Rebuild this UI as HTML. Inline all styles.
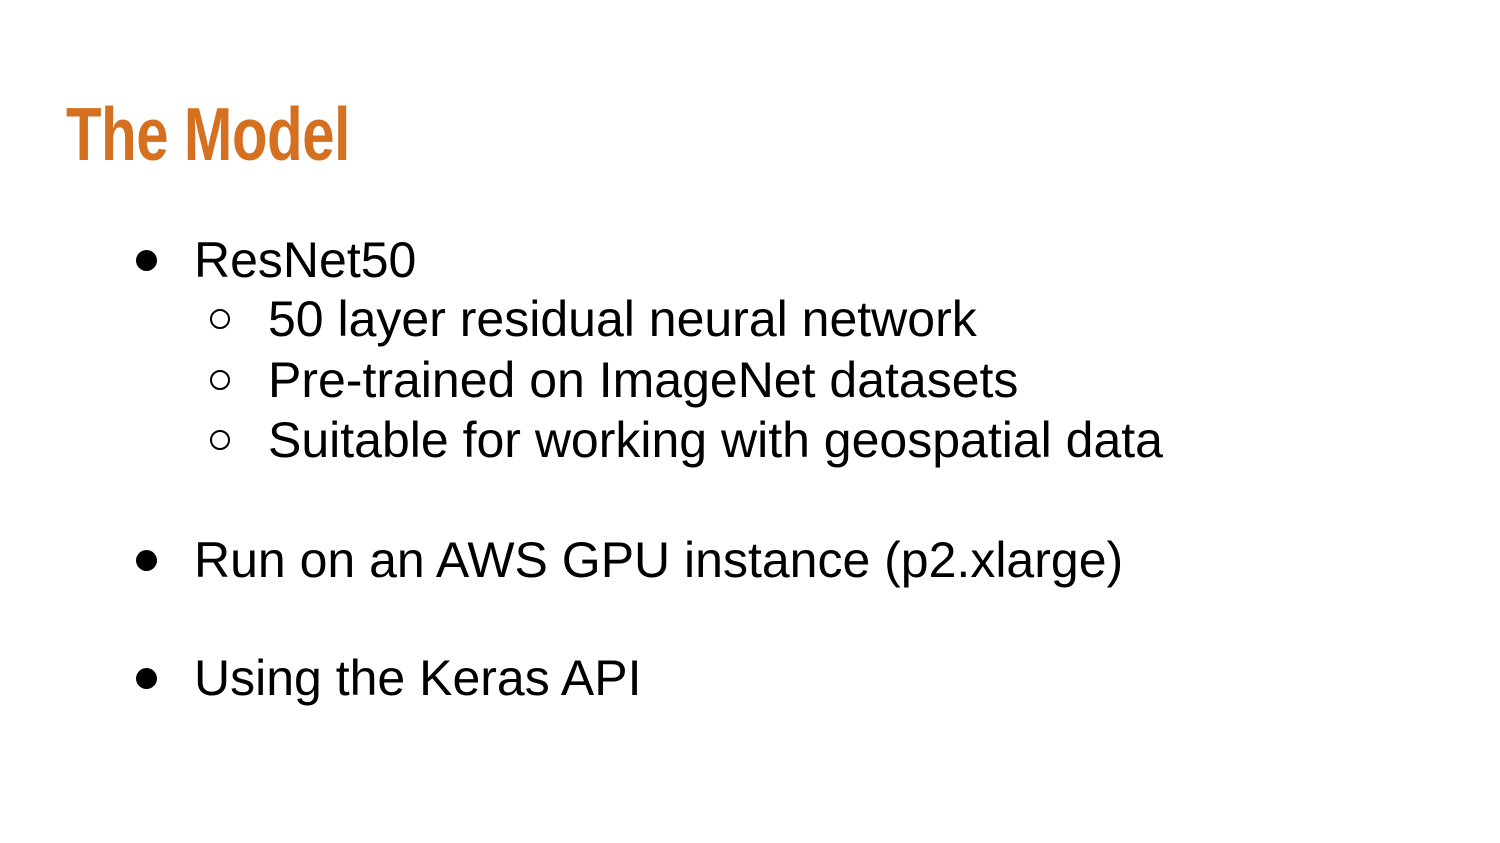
<!DOCTYPE html>
<html><head><style>
body{margin:0;width:1500px;height:843px;background:#fff;position:relative;overflow:hidden;font-family:"Liberation Sans",Arial,sans-serif;}
.t{position:absolute;left:66px;top:97px;font-size:75px;line-height:75px;font-weight:bold;color:#d4701f;transform:scaleX(0.775);transform-origin:left top;white-space:nowrap;letter-spacing:-0.5px}
.l{position:absolute;font-size:50px;line-height:50px;color:#000;white-space:nowrap}
.dot{position:absolute;width:21px;height:21px;border-radius:50%;background:#000}
.circ{position:absolute;width:20px;height:20px;border-radius:50%;border:2px solid #000;box-sizing:border-box}
</style></head><body>
<div class="t">The Model</div>
<div class="dot" style="left:136px;top:250px"></div><div class="l" style="left:194px;top:235px">ResNet50</div>
<div class="circ" style="left:210px;top:309px"></div><div class="l" style="left:268px;top:294px">50 layer residual neural network</div>
<div class="circ" style="left:210px;top:370px"></div><div class="l" style="left:268px;top:355px">Pre-trained on ImageNet datasets</div>
<div class="circ" style="left:210px;top:430px"></div><div class="l" style="left:268px;top:415px">Suitable for working with geospatial data</div>
<div class="dot" style="left:136px;top:550px"></div><div class="l" style="left:194px;top:535px">Run on an AWS GPU instance (p2.xlarge)</div>
<div class="dot" style="left:136px;top:668px"></div><div class="l" style="left:194px;top:653px">Using the Keras API</div>
</body></html>
